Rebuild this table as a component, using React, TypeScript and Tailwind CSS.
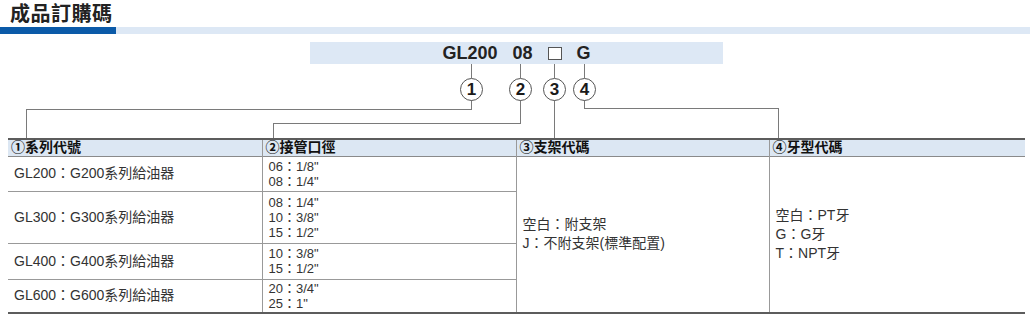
const sizes = [
  { series: "GL200：G200系列給油器", ports: ["06：1/8\"", "08：1/4\""], h: "h-[35px]" },
  { series: "GL300：G300系列給油器", ports: ["08：1/4\"", "10：3/8\"", "15：1/2\""], h: "h-[52px]" },
  { series: "GL400：G400系列給油器", ports: ["10：3/8\"", "15：1/2\""], h: "h-[36px]" },
  { series: "GL600：G600系列給油器", ports: ["20：3/4\"", "25：1\""], h: "h-[34px]" },
];

// circled numbers under the code
const markers = [
  { n: "1", x: 471 },
  { n: "2", x: 520 },
  { n: "3", x: 554 },
  { n: "4", x: 584 },
];

function Connectors() {
  return (
    <div className="relative h-[74px]">
      <svg className="absolute inset-0" width="1033" height="74" shapeRendering="crispEdges">
        <g stroke="#7a7a7a" strokeWidth="1" fill="none">
          {markers.map((m) => (
            <line key={m.n} x1={m.x + 0.5} y1={0} x2={m.x + 0.5} y2={14} />
          ))}
          <polyline points="471.5,36 471.5,45.5 26.5,45.5 26.5,74" />
          <polyline points="520.5,36 520.5,59.5 273.5,59.5 273.5,74" />
          <polyline points="554.5,36 554.5,74" />
          <polyline points="584.5,36 584.5,44.5 778.5,44.5 778.5,74" />
        </g>
      </svg>
      {markers.map((m) => (
        <div
          key={m.n}
          className="absolute top-[14px] w-[23px] h-[23px] rounded-full border-[1.5px] border-[#555] bg-white flex items-center justify-center text-[17px] font-bold text-[#1a1a1a] leading-none"
          style={{ left: m.x - 11 }}
        >
          {m.n}
        </div>
      ))}
    </div>
  );
}

export default function App() {
  return (
    <div
      className="w-[1033px] h-[322px] bg-white overflow-hidden"
      style={{ fontFamily: '"Liberation Sans", "Noto Sans CJK TC", sans-serif' }}
    >
      {/* title */}
      <div className="h-[27px] pl-[10px] pt-[2px] text-[20px] font-bold text-[#222] leading-[24px] tracking-[0.5px]">
        成品訂購碼
      </div>
      <div className="flex h-[7px] mr-[3px]">
        <div className="w-[116px] bg-[#0b5aa8]" />
        <div className="flex-1 bg-[#dde8f5]" />
      </div>

      {/* code bar */}
      <div className="mt-[8px] ml-[310px] w-[413px] h-[22px] bg-[#dde8f5] flex items-center justify-center gap-[15px] text-[18px] font-bold text-[#222] leading-none">
        <span>GL200</span>
        <span>08</span>
        <span className="w-[14px] h-[13px] border border-[#555] bg-white mt-[1px]" />
        <span>G</span>
      </div>

      <Connectors />

      {/* table */}
      <table className="ml-[8px] w-[1017px] table-fixed border-collapse text-[14px] text-[#333]">
        <colgroup>
          <col className="w-[254px]" />
          <col className="w-[254px]" />
          <col className="w-[253px]" />
          <col className="w-[256px]" />
        </colgroup>
        <thead>
          <tr className="h-[17px] bg-[#dce7f3] text-[14px] font-bold text-[#111] border-t-2 border-t-[#5c5c5c] border-b-[1.5px] border-b-[#8a8a8a]">
            <th className="text-left font-bold pl-[3px] py-0 leading-[15px] border-r border-[#999]">①系列代號</th>
            <th className="text-left font-bold pl-[3px] py-0 leading-[15px] border-r border-[#999]">②接管口徑</th>
            <th className="text-left font-bold pl-[3px] py-0 leading-[15px] border-r border-[#999]">③支架代碼</th>
            <th className="text-left font-bold pl-[3px] py-0 leading-[15px]">④牙型代碼</th>
          </tr>
        </thead>
        <tbody className="border-b-2 border-b-[#5c5c5c]">
          {sizes.map((s, i) => (
            <tr key={s.series} className={`${s.h} border-b border-[#999]`}>
              <td className="pl-[6px] align-middle border-r border-[#999] leading-[15px]">{s.series}</td>
              <td className="pl-[6px] align-middle border-r border-[#999] leading-[15px] text-[13px]">
                {s.ports.map((p) => (
                  <div key={p}>{p}</div>
                ))}
              </td>
              {i === 0 && (
                <>
                  <td rowSpan={4} className="pl-[6px] align-middle border-r border-[#999] leading-[19px]">
                    <div>空白：附支架</div>
                    <div>J：不附支架(標準配置)</div>
                  </td>
                  <td rowSpan={4} className="pl-[6px] align-middle leading-[19px]">
                    <div>空白：PT牙</div>
                    <div>G：G牙</div>
                    <div>T：NPT牙</div>
                  </td>
                </>
              )}
            </tr>
          ))}
        </tbody>
      </table>
    </div>
  );
}
